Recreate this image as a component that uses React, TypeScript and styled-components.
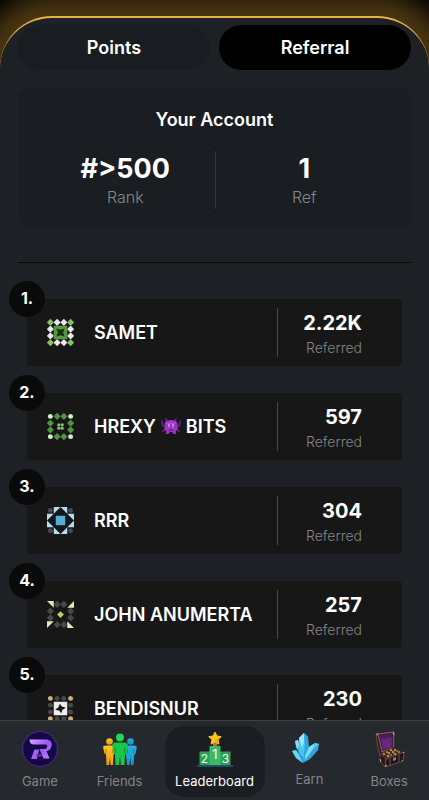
import React, { useState } from "react";
import styled, { createGlobalStyle, css } from "styled-components";

const GlobalStyle = createGlobalStyle`
  * { box-sizing: border-box; }
  body {
    margin: 0;
    background: #000;
    color: #fff;
    font-family: Inter, "Liberation Sans", sans-serif;
  }
  button { font: inherit; color: inherit; border: 0; cursor: pointer; }
  ol { list-style: none; margin: 0; padding: 0; }
  h2 { margin: 0; }
  svg { display: block; flex: none; }
`;

const Screen = styled.div`
  height: 100vh;
  display: flex;
  flex-direction: column;
  overflow: hidden;
`;

const Panel = styled.main`
  flex: 1;
  min-height: 0;
  margin-top: 16px;
  padding: 7px 18px 0;
  border-top: 2px solid #e6b04a;
  border-radius: 52px 52px 0 0;
  background: #1d2025;
  box-shadow: 0 0 24px 22px #4a3612;
`;

const Tabs = styled.div`
  display: grid;
  grid-template-columns: 1fr 1fr;
  gap: 9px;
`;

const Tab = styled.button<{ $active: boolean }>`
  height: 45px;
  padding: 0;
  border-radius: 23px;
  background: ${(p) => (p.$active ? "#000" : "#191c20")};
  font-size: 18px;
  font-weight: 600;
`;

const Account = styled.section`
  margin-top: 17px;
  padding: 21px 18px 19px;
  border-radius: 14px;
  background: #1a1d21;
`;

const AccountTitle = styled.h2`
  font-size: 18px;
  line-height: 24px;
  font-weight: 600;
  text-align: center;
`;

const Stats = styled.div`
  display: grid;
  grid-template-columns: 1fr 1fr;
  margin-top: 19px;
`;

const Stat = styled.div`
  display: flex;
  flex-direction: column;
  align-items: center;
  height: 58px;
  & + & { border-left: 1px solid #34373b; }
`;

const StatValue = styled.strong`
  font-size: 27px;
  line-height: 35px;
  font-weight: 700;
`;

const StatLabel = styled.span`
  font-size: 16px;
  line-height: 23px;
  font-weight: 300;
  color: #85878a;
`;

const Divider = styled.hr`
  margin: 34px 0 36px;
  border: 0;
  border-top: 1px solid #08090a;
`;

const Ranking = styled.ol`
  display: flex;
  flex-direction: column;
  gap: 27px;
  && { padding: 0 9px; }
`;

const Row = styled.li`
  position: relative;
  display: flex;
  align-items: center;
  height: 67px;
  padding: 0 40px 0 20px;
  border-radius: 4px;
  background: #171717;
`;

const Rank = styled.span`
  position: absolute;
  left: -18px;
  top: -18px;
  width: 36px;
  height: 36px;
  border-radius: 50%;
  background: #0a0a0b;
  font-size: 16px;
  line-height: 35px;
  font-weight: 700;
  text-align: center;
`;

const Name = styled.span`
  flex: 1;
  display: flex;
  align-items: center;
  gap: 5px;
  margin-left: 20px;
  font-size: 18px;
  font-weight: 600;
  white-space: nowrap;
`;

const Score = styled.div`
  display: flex;
  flex-direction: column;
  align-items: flex-end;
  width: 85px;
  height: 49px;
  border-left: 1px solid #47484a;
`;

const ScoreValue = styled.strong`
  font-size: 20px;
  line-height: 30px;
  font-weight: 700;
`;

const ScoreLabel = styled.span`
  font-size: 14px;
  line-height: 19px;
  font-weight: 300;
  color: #858585;
`;

const Nav = styled.nav`
  position: relative;
  display: flex;
  height: 80px;
  padding: 5px 0 3px;
  border-top: 1px solid #3d3f41;
  background: #25282d;
`;

const NavItem = styled.button<{ $active?: boolean }>`
  flex: 1;
  min-width: 0;
  display: flex;
  flex-direction: column;
  align-items: center;
  gap: 4px;
  padding: 5px 0 0;
  background: transparent;
  color: #828487;
  font-size: 13px;
  line-height: 20px;
  font-weight: 400;
  ${(p) =>
    p.$active &&
    css`
      flex: 0 0 100px;
      margin: 0 5px;
      border-radius: 20px;
      background: #1a1d21;
      color: #fff;
    `}
`;

type CellKind = "dot" | "gem" | "corner" | "frame";

interface IdenticonProps {
  corner: string;
  side: string;
  cornerKind: CellKind;
  sideKind: CellKind;
  children: React.ReactNode;
}

const cornerCells = [[0, 0], [3, 0], [3, 3], [0, 3]];
const sideCells = [[1, 0], [2, 0], [3, 1], [3, 2], [2, 3], [1, 3], [0, 2], [0, 1]];
const cornerTriangles = ["0,0 10,0 10,10", "40,0 40,10 30,10", "30,30 30,40 40,40", "0,30 10,30 0,40"];

function Cell({ x, y, kind, fill, index }: { x: number; y: number; kind: CellKind; fill: string; index: number }) {
  const left = x * 10;
  const top = y * 10;
  if (kind === "dot") return <circle cx={left + 5} cy={top + 5} r="3.7" fill={fill} />;
  if (kind === "gem")
    return (
      <path
        d={`M${left + 5} ${top + 1}L${left + 9} ${top + 5}L${left + 5} ${top + 9}L${left + 1} ${top + 5}Z`}
        fill={fill}
        stroke={fill}
        strokeWidth="2"
        strokeLinejoin="round"
      />
    );
  if (kind === "frame") return <rect x={left} y={top} width="10" height="10" fill={fill} />;
  return <polygon points={cornerTriangles[index]} fill={fill} />;
}

function Identicon({ corner, side, cornerKind, sideKind, children }: IdenticonProps) {
  return (
    <svg width="27" height="27" viewBox="0 0 40 40" aria-hidden="true">
      {sideCells.map(([x, y], i) => (
        <Cell key={i} x={x} y={y} kind={sideKind} fill={side} index={i} />
      ))}
      {cornerCells.map(([x, y], i) => (
        <Cell key={i} x={x} y={y} kind={cornerKind} fill={corner} index={i} />
      ))}
      {children}
    </svg>
  );
}

function Monster() {
  return (
    <svg width="20" height="17" viewBox="0 0 20 17" role="img" aria-label="monster">
      <g fill="none" stroke="#7a259c" strokeWidth="1.4" strokeLinecap="round" strokeLinejoin="round">
        <path d="M6.5 3.5L5 .8M13.5 3.5L15 .8M4 9L1.5 7.5L.9 3M16 9l2.5-1.5L19.1 3M4.5 11L2 13.2M15.5 11l2.5 2.2" />
      </g>
      <path d="M5 3h2l1-1h4l1 1h2l1.5 2.5V11L14.5 14l1 2h-3L11 14H9l-1.500 2h-3l1-2L3.500 11V5.500z" fill="#9c33c5" />
      <path d="M5.500 4.500h9v1.500h-9z" fill="#b44adb" />
      <path d="M7 6.500h2v3H7zM11 6.500h2v3h-2z" fill="#e9c8ed" />
      <path d="M7.500 7.500h1v2h-1zM11.500 7.500h1v2h-1z" fill="#402060" />
      <path d="M8 12h4" stroke="#5c147c" />
    </svg>
  );
}

function GameIcon() {
  return (
    <svg width="36" height="36" viewBox="0 0 36 36" aria-hidden="true">
      <defs>
        <linearGradient id="game-mark" x1="0" y1="0" x2="1" y2="1">
          <stop stopColor="#dba8ff" />
          <stop offset=".5" stopColor="#9c55f0" />
          <stop offset="1" stopColor="#bb86fa" />
        </linearGradient>
      </defs>
      <circle cx="18" cy="18" r="17.400" fill="#150846" stroke="#56329d" strokeWidth=".8" />
      <path d="M7.500 8.500H23c5 0 7.500 2.500 6.500 6.500-.6 2.800-2.400 4.600-5 5.300l3 7.200h-6l-4.200-9.500h5c1.600 0 2.600-.8 2.900-2.200.3-1.300-.4-2.200-2-2.200H11.500C9 13.600 7.500 11.500 7.500 8.500z" fill="url(#game-mark)" />
      <path d="M12.500 18.500h4.500L14.800 28H9z" fill="#a660f3" />
      <path d="M14.500 23h4.500l1.200 2.500-5.500.5z" fill="#582bb4" />
    </svg>
  );
}

function FriendsIcon() {
  return (
    <svg width="36" height="36" viewBox="0 0 36 36" aria-hidden="true">
      <defs>
        <linearGradient id="friend-left" x1="0" y1="0" x2="0" y2="1">
          <stop stopColor="#ffc52c" />
          <stop offset="1" stopColor="#ef9813" />
        </linearGradient>
        <linearGradient id="friend-right" x1="0" y1="0" x2="0" y2="1">
          <stop stopColor="#28afe1" />
          <stop offset="1" stopColor="#1593cc" />
        </linearGradient>
      </defs>
      <g fill="url(#friend-left)">
        <circle cx="7.500" cy="10.500" r="3.300" />
        <path d="M4 14.500h7.500l1 5-1 5-.5 9.500H8.500L8 27l-1 7H4.500L4 23l-1.500-.5L1 16q.3-1.500 3-1.500z" />
      </g>
      <path d="M3.500 18l.7 4M11 18l-.4 4" stroke="#8e6212" strokeWidth=".7" />
      <g fill="url(#friend-right)">
        <circle cx="28.500" cy="10.500" r="3.300" />
        <path d="M25 14.500h7.500q2 .2 2.300 2L33.500 23l-1.200.5-.8 10.500H29l-.8-7-.7 7H25l-.8-9-1-5z" />
      </g>
      <path d="M32 18l-.5 4M25 18l.5 4" stroke="#0e638b" strokeWidth=".7" />
      <circle cx="18" cy="6.500" r="4" fill="#20d652" />
      <path d="M13.500 11.500h9q3 0 3.300 2.500l-1.300 8.500-1.500.5L22.500 34h-3.700L18 25l-.8 9h-3.700L13 23l-1.500-.5-1.300-8.500q.3-2.500 3.300-2.500z" fill="#16c94a" />
      <path d="M12.900 16l.7 6M23.100 16l-.7 6" stroke="#098331" strokeWidth=".8" />
    </svg>
  );
}

const PodiumDigits = styled.g`
  fill: #ecfff0;
  font-family: Inter, sans-serif;
  text-anchor: middle;
`;

function PodiumIcon() {
  return (
    <svg width="36" height="36" viewBox="0 0 36 36" aria-hidden="true">
      <path d="M16 12h4v4h-4z" fill="#b77b1c" />
      <path d="M18 1l1.900 4 4.300.6-3.100 3.100.8 4.500-3.900-2.100-3.900 2.100.8-4.500-3.100-3.100 4.300-.6z" fill="#f7c51c" stroke="#f7c51c" strokeWidth="1" strokeLinejoin="round" />
      <path d="M18 11.100l3.900 2.100-.8-4.500 3.100-3.100-6.200 3z" fill="#efaf13" />
      <path d="M2.500 20.500H13v14H2.500zM23 20.500h10.500v14H23z" fill="#2f9f58" />
      <path d="M12.500 15h11v19.500h-11z" fill="#3fb86b" />
      <path d="M0 34h36v2H0z" fill="#234b62" />
      <PodiumDigits>
        <text x="7.500" y="31.500" fontSize="12">2</text>
        <text x="18" y="28" fontSize="13">1</text>
        <text x="28.500" y="31.500" fontSize="12">3</text>
      </PodiumDigits>
    </svg>
  );
}

function CrystalIcon() {
  return (
    <svg width="34" height="34" viewBox="0 0 34 34" aria-hidden="true">
      <path d="M3 10l3-1 4 4 1 12-3-1-4-8z" fill="#45b2e4" />
      <path d="M3 10l3-1 1 6-2 3z" fill="#85daf7" />
      <path d="M7 7l5-5 4 4 1 14-6 11-4-10z" fill="#4cc4ee" />
      <path d="M12 2l4 4 1 14-6 11 2-17z" fill="#2ba5da" />
      <path d="M7 7l5-5v9l-2 6z" fill="#9be6fa" />
      <path d="M17 16l6-4 4 1-1 6-8 9-7 4 2-7z" fill="#2ea9e0" />
      <path d="M17 16l6-4-2 6-8 11v-4z" fill="#7fdcf6" />
      <path d="M0 20l4-1 7 7v6l-7-5z" fill="#2c9bd8" />
      <path d="M0 20l4-1 3 5 4 8-7-5z" fill="#6cd2f4" />
      <path d="M23 12l4 1-5 5z" fill="#59c9ef" />
    </svg>
  );
}

function ChestIcon() {
  return (
    <svg width="36" height="36" viewBox="0 0 36 36" aria-hidden="true">
      <path d="M5 3l3-1 4 19-3 3-2-7z" fill="#2c1b22" stroke="#80604f" strokeWidth=".7" />
      <path d="M7 3l16-2-.5 15L11 21z" fill="#421a4e" stroke="#8a6655" strokeWidth="1" />
      <path d="M9.500 5l11.500-1.500-.5 12L12 19z" fill="#652a7b" />
      <path d="M9.500 5l11.500-1.500v3l-11 2z" fill="#4c1c5d" />
      <path d="M9 23l13-7 11 4-18 8z" fill="#3e2822" />
      <path d="M9 23l6 5-1 8-5-6z" fill="#251519" stroke="#71513f" strokeWidth=".7" />
      <path d="M15 28l18-7-1 9-18 6z" fill="#201319" stroke="#80604c" strokeWidth=".8" />
      <path d="M19 27v7M28 24v7" stroke="#5b3e35" strokeWidth="1.500" />
      <g fill="#b88b57">
        <circle cx="13" cy="23" r="1.200" />
        <circle cx="16" cy="21" r="1.100" />
        <circle cx="20" cy="19" r="1.300" />
        <circle cx="24" cy="19" r="1.200" />
        <circle cx="28" cy="21" r="1.100" />
        <circle cx="24" cy="23" r="1.300" />
        <circle cx="17" cy="25" r="1.300" />
      </g>
      <g fill="#e0bc82">
        <circle cx="18" cy="22" r=".9" />
        <circle cx="22" cy="21" r="1" />
        <circle cx="20" cy="24" r=".8" />
        <circle cx="26" cy="20" r=".7" />
      </g>
      <path d="M22 27l3-1v3l-3 1z" fill="#a47a56" />
      <path d="M5 3l2 1M22 1l1 3M9 28l1 3M14 35l2-.500M31 29l1 1M32 21l1 1" stroke="#d1a782" />
    </svg>
  );
}

const players = [
  {
    name: "SAMET",
    score: "2.22K",
    icon: (
      <Identicon corner="#84c367" side="#eee4ec" cornerKind="gem" sideKind="gem">
        <path d="M10 10h20v20H10z" fill="#579940" />
        <path d="M14 14l6 2 6-2-2 6 2 6-6-2-6 2 2-6z" fill="#173011" />
      </Identicon>
    ),
  },
  {
    name: "HREXY",
    suffix: "BITS",
    score: "597",
    icon: (
      <Identicon corner="#d5ebcc" side="#529443" cornerKind="dot" sideKind="gem">
        <g fill="#84c46e">
          <circle cx="17.500" cy="17.500" r="2.400" />
          <circle cx="22.500" cy="17.500" r="2.400" />
          <circle cx="17.500" cy="22.500" r="2.400" />
          <circle cx="22.500" cy="22.500" r="2.400" />
        </g>
      </Identicon>
    ),
  },
  {
    name: "RRR",
    score: "304",
    icon: (
      <Identicon corner="#4a4b4d" side="#b4dce9" cornerKind="dot" sideKind="frame">
        <path d="M20 0l20 20-20 20L0 20z" fill="#111820" />
        <path d="M13 13h14v14H13z" fill="#5baed0" />
      </Identicon>
    ),
  },
  {
    name: "JOHN ANUMERTA",
    score: "257",
    icon: (
      <Identicon corner="#e5e8bc" side="#49494a" cornerKind="corner" sideKind="gem">
        <path d="M20 15l5 5-5 5-5-5z" fill="#c4cd69" />
      </Identicon>
    ),
  },
  {
    name: "BENDISNUR",
    score: "230",
    icon: (
      <Identicon corner="#ceb273" side="#49494a" cornerKind="dot" sideKind="dot">
        <path d="M10 10h20v20H10z" fill="#eeeef0" />
        <path d="M19 13l3 4 6 2-5 3-2 5-3-4-6-1 5-4z" fill="#171717" />
      </Identicon>
    ),
  },
];

const navItems = [
  { label: "Game", icon: <GameIcon /> },
  { label: "Friends", icon: <FriendsIcon /> },
  { label: "Leaderboard", icon: <PodiumIcon /> },
  { label: "Earn", icon: <CrystalIcon /> },
  { label: "Boxes", icon: <ChestIcon /> },
];

export default function App() {
  const [tab, setTab] = useState("Referral");
  return (
    <Screen>
      <GlobalStyle />
      <Panel>
        <Tabs>
          {["Points", "Referral"].map((label) => (
            <Tab key={label} type="button" $active={tab === label} aria-pressed={tab === label} onClick={() => setTab(label)}>
              {label}
            </Tab>
          ))}
        </Tabs>
        <Account>
          <AccountTitle>Your Account</AccountTitle>
          <Stats>
            <Stat>
              <StatValue>#&gt;500</StatValue>
              <StatLabel>Rank</StatLabel>
            </Stat>
            <Stat>
              <StatValue>1</StatValue>
              <StatLabel>Ref</StatLabel>
            </Stat>
          </Stats>
        </Account>
        <Divider />
        <Ranking>
          {players.map((player, i) => (
            <Row key={player.name}>
              <Rank>{i + 1}.</Rank>
              {player.icon}
              <Name>
                {player.name}
                {player.suffix && (
                  <>
                    <Monster />
                    {player.suffix}
                  </>
                )}
              </Name>
              <Score>
                <ScoreValue>{player.score}</ScoreValue>
                <ScoreLabel>Referred</ScoreLabel>
              </Score>
            </Row>
          ))}
        </Ranking>
      </Panel>
      <Nav>
        {navItems.map(({ label, icon }) => (
          <NavItem key={label} type="button" $active={label === "Leaderboard"}>
            {icon}
            {label}
          </NavItem>
        ))}
      </Nav>
    </Screen>
  );
}
